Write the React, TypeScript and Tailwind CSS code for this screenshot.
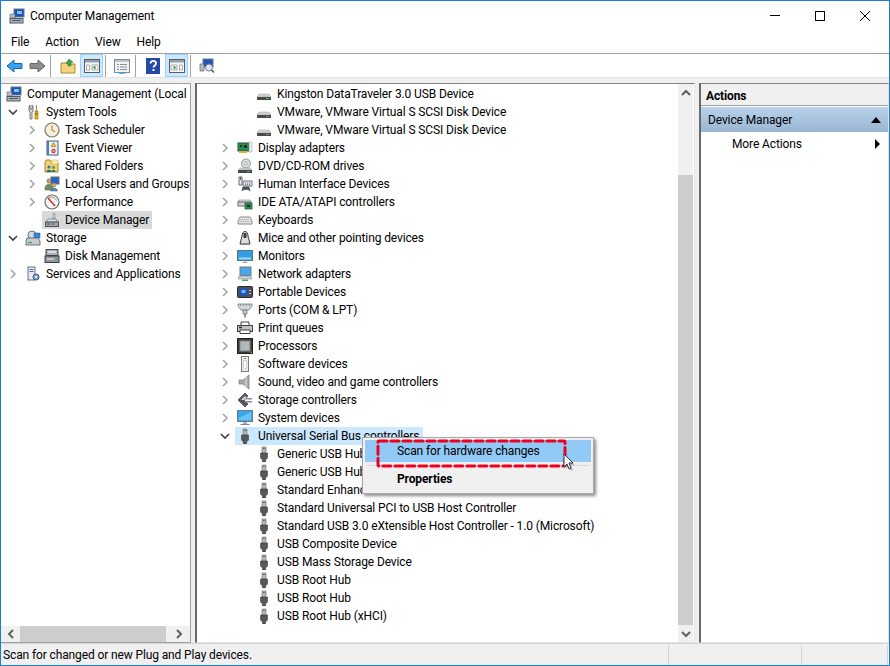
import type { ReactNode } from 'react';

type IconName =
  | 'computer' | 'tools' | 'clock' | 'log' | 'folder' | 'users' | 'perf' | 'devmgr' | 'storage' | 'disk' | 'services'
  | 'drive' | 'display' | 'dvd' | 'hid' | 'ide' | 'kbd' | 'mouse' | 'monitor' | 'net' | 'portable' | 'ports'
  | 'print' | 'cpu' | 'soft' | 'sound' | 'storagec' | 'system' | 'usb';

const icons: Record<IconName, ReactNode> = {
  computer: (
    <>
      <rect x="5" y="1" width="10" height="8" fill="#1d4fb8" stroke="#6b7b90" />
      <path d="M8 3h5v3H8z" fill="#7ec2f2" />
      <path d="M1 6h5v4H1z" fill="#b4bcc4" stroke="#5d6670" strokeWidth="0.6" />
      <rect x="1" y="10.5" width="13" height="4.5" fill="#aeb6bd" stroke="#4e565e" />
      <path d="M3 12.5h9" stroke="#4e565e" />
    </>
  ),
  tools: (
    <>
      <path d="M4 2v5l1 1v7h2V8l1-1V2L7 1v4H5V1z" fill="#d8d8d8" stroke="#5f5f5f" strokeWidth="0.8" />
      <path d="M11 1h1v6h-1z" fill="#8d8d8d" />
      <path d="M10 7h3v8h-3z" fill="#f0b020" stroke="#8a6200" strokeWidth="0.6" />
      <path d="M10.5 10h2" stroke="#5e4300" />
    </>
  ),
  clock: (
    <>
      <circle cx="8" cy="8" r="7" fill="#f5efdc" stroke="#7d7464" strokeWidth="1.2" />
      <path d="M8 3.5V8l3 2" fill="none" stroke="#c08a2e" strokeWidth="1.2" />
    </>
  ),
  log: (
    <>
      <rect x="3" y="1" width="11" height="14" fill="#e8eef6" stroke="#3f5f93" />
      <path d="M3 1h2v14H3z" fill="#5879ad" />
      <path d="M9.5 2.5l2.5 4H7z" fill="#f0c020" stroke="#8a6a00" strokeWidth="0.5" />
      <circle cx="9.5" cy="11" r="2.2" fill="#d8342c" />
      <path d="M8.4 11h2.2" stroke="#fff" />
    </>
  ),
  folder: (
    <>
      <path d="M1 4l1-2h4l1 2h7v10H1z" fill="#f2d072" stroke="#a9883a" />
      <path d="M8 2h6v4H8z" fill="#fbeeb8" stroke="#c9ad5c" strokeWidth="0.5" />
      <circle cx="5" cy="9" r="1.6" fill="#3e6ea0" />
      <path d="M2.5 14c0-3 5-3 5 0z" fill="#2f5d8c" />
      <circle cx="9.5" cy="9.5" r="1.4" fill="#46a05a" />
      <path d="M7.5 14c0-3 4-3 4 0z" fill="#2f7d48" />
    </>
  ),
  users: (
    <>
      <rect x="7" y="1" width="8" height="7" fill="#2a63c4" stroke="#5b6d82" />
      <circle cx="5" cy="5" r="2.2" fill="#c8a070" stroke="#7a5a36" strokeWidth="0.5" />
      <path d="M1 12c0-5 8-5 8 0v2H1z" fill="#70905a" stroke="#4c6038" strokeWidth="0.5" />
      <circle cx="10" cy="9" r="2" fill="#d8b080" stroke="#8a6a44" strokeWidth="0.5" />
      <path d="M6.5 15c0-4 7-4 7 0z" fill="#6084b0" stroke="#3f5c82" strokeWidth="0.5" />
    </>
  ),
  perf: (
    <>
      <circle cx="8" cy="8" r="7" fill="#f7f7f7" stroke="#6a6a6a" strokeWidth="1.2" />
      <path d="M4 4l7 8" stroke="#d42a22" strokeWidth="1.5" />
      <path d="M5 3.5c3-1 6 0 7.5 3" fill="none" stroke="#8a8a8a" />
    </>
  ),
  devmgr: (
    <>
      <path d="M9 1h2v6H9z" fill="#c8ccd0" stroke="#7c8288" strokeWidth="0.5" />
      <path d="M4 7h8l2 3H2z" fill="#dfe2e5" stroke="#656b71" strokeWidth="0.7" />
      <rect x="1.5" y="10" width="13" height="4.5" fill="#9fa6ad" stroke="#4f555b" />
      <path d="M3 12h3M8 12h2" stroke="#3d4348" />
    </>
  ),
  storage: (
    <>
      <circle cx="7" cy="5" r="4" fill="#d5dadf" stroke="#6b7278" />
      <rect x="9" y="3" width="6" height="5" fill="#2d8ad8" stroke="#26619a" strokeWidth="0.5" />
      <path d="M2 8h11l2 3v4H1v-4z" fill="#c6cbd0" stroke="#555b61" strokeWidth="0.8" />
      <path d="M3 12.5h4" stroke="#4ba04b" strokeWidth="1.2" />
    </>
  ),
  disk: (
    <>
      <rect x="2" y="1.5" width="12" height="6" fill="#aab0b6" stroke="#44494e" />
      <path d="M4 4h8" stroke="#f2f2f2" strokeWidth="1.4" />
      <rect x="1" y="8" width="14" height="6.5" fill="#8f959b" stroke="#3a3f44" />
      <path d="M3 11h7" stroke="#e8e8e8" strokeWidth="1.2" />
      <path d="M12 11h2" stroke="#4ba04b" strokeWidth="1.2" />
    </>
  ),
  services: (
    <>
      <rect x="3" y="1" width="7" height="13" fill="#e8ebef" stroke="#6a7179" />
      <path d="M4.5 3.5h4M4.5 5.5h4" stroke="#5071a6" />
      <circle cx="11" cy="11" r="3" fill="#7c9fcf" stroke="#3d5f92" />
      <circle cx="11" cy="11" r="1" fill="#fff" />
    </>
  ),
  drive: (
    <>
      <path d="M3 8h10l2 3H1z" fill="#cfcfcf" stroke="#a5a5a5" strokeWidth="0.5" />
      <rect x="1" y="11" width="14" height="3" fill="#4a4a4a" />
      <path d="M10 12.5h3" stroke="#44c04a" />
    </>
  ),
  display: (
    <>
      <rect x="1" y="3" width="11" height="8" fill="#2f8a52" stroke="#1f5e38" />
      <path d="M3 5h2v2H3zM7 5h3v3H7z" fill="#232f27" />
      <path d="M12 2h3v10h-3z" fill="#e9e9e9" stroke="#a6a6a6" strokeWidth="0.5" />
      <path d="M2 11h8v2H2z" fill="#d8b04a" />
    </>
  ),
  dvd: (
    <>
      <circle cx="9" cy="5.5" r="4.5" fill="#d9dde0" stroke="#92989e" />
      <circle cx="9" cy="5.5" r="1.4" fill="#fff" stroke="#7c8288" strokeWidth="0.6" />
      <path d="M3 10h10l2 2H1z" fill="#cfcfcf" stroke="#a5a5a5" strokeWidth="0.5" />
      <rect x="1" y="12" width="14" height="3" fill="#4a4a4a" />
      <path d="M10 13.5h3" stroke="#44c04a" />
    </>
  ),
  hid: (
    <>
      <path d="M2 1h3v8H2z" fill="#eaeaea" stroke="#5d5d5d" strokeWidth="0.9" />
      <path d="M3.500 1v3" stroke="#5d5d5d" />
      <rect x="6" y="5" width="9" height="5" fill="#dfe3e8" stroke="#6c7683" />
      <path d="M8 7h5M8 8.500h5" stroke="#6c7683" strokeDasharray="1 1" />
      <path d="M5 15l1-4h6l1 4-2-1.500H7z" fill="#4c5766" stroke="#2e3742" strokeWidth="0.6" />
    </>
  ),
  ide: (
    <>
      <path d="M2 6h11l1 2H1z" fill="#dcdcdc" stroke="#8a8a8a" strokeWidth="0.6" />
      <rect x="1" y="8" width="13" height="4" fill="#d2d2d2" stroke="#6a6a6a" />
      <rect x="8" y="9" width="7" height="6" fill="#2f8a52" stroke="#1d5a36" strokeWidth="0.7" />
      <path d="M10 11h3v2h-3z" fill="#1b2b20" />
    </>
  ),
  kbd: (
    <>
      <path d="M3 5h10l2 4v3H1V9z" fill="#e7e7e7" stroke="#8b8b8b" />
      <path d="M3.500 7.500h9M2.500 9.500h11" stroke="#9a9a9a" strokeDasharray="1 0.8" />
    </>
  ),
  mouse: (
    <>
      <path d="M5 6c0-6 6-6 6 0l2 8H3z" fill="#dcdcdc" stroke="#3c3c3c" />
      <path d="M6.500 3h3v5h-3z" fill="#3c3c3c" />
      <path d="M3 14.500h10" stroke="#8a8a8a" />
    </>
  ),
  monitor: (
    <>
      <rect x="0.500" y="2.500" width="15" height="10" fill="#2f9fe6" stroke="#656f78" />
      <path d="M2 9.500h12v2H2z" fill="#ffffff" opacity="0.55" />
      <path d="M5.500 14.500h5" stroke="#9aa3ab" />
      <path d="M8 13v1" stroke="#9aa3ab" />
    </>
  ),
  net: (
    <>
      <rect x="3" y="1" width="11" height="8.500" fill="#49a6e8" stroke="#6d7a86" />
      <path d="M2 10h12l1 3H1z" fill="#c6d0d6" stroke="#8a949c" strokeWidth="0.6" />
      <path d="M5 13.500h6v1.500H5z" fill="#45b04a" />
    </>
  ),
  portable: (
    <>
      <rect x="0.500" y="2.500" width="15" height="11" rx="1" fill="#4c4f54" stroke="#2a2c30" />
      <rect x="2.500" y="4.500" width="8" height="7" fill="#1a53d0" />
      <path d="M4.500 6h4v3h-4z" fill="#79b6ee" />
      <path d="M12 6h2v1h-2zM12 9h2v1h-2z" fill="#c5c8cc" />
    </>
  ),
  ports: (
    <>
      <path d="M1 2h14v2l-3 4v0H4L1 4z" fill="#d5d8db" stroke="#75797d" strokeWidth="0.8" />
      <path d="M3 3h1M6 3h1M9 3h1M12 3h1" stroke="#5c6064" />
      <path d="M6 8h4v4H6z" fill="#c2c6ca" stroke="#75797d" strokeWidth="0.8" />
      <path d="M7 12h2v3.500H7z" fill="#8f9397" />
    </>
  ),
  print: (
    <>
      <path d="M4 2h8v4H4z" fill="#fff" stroke="#3f3f3f" />
      <rect x="0.500" y="5.500" width="15" height="6" fill="#bfc3c7" stroke="#3f3f3f" />
      <path d="M2 7.500h3" stroke="#2d2d2d" strokeWidth="1.500" />
      <path d="M3 10h10v3.500H3z" fill="#fff" stroke="#3f3f3f" />
    </>
  ),
  cpu: (
    <>
      <rect x="0.500" y="0.500" width="15" height="15" fill="#3d3a38" stroke="#242220" />
      <rect x="3" y="3" width="10" height="10" fill="#b4b7ba" stroke="#83878b" />
      <path d="M13 15h2v-2z" fill="#d8862a" />
    </>
  ),
  soft: (
    <>
      <rect x="4.500" y="0.500" width="7" height="15" fill="#ececec" stroke="#7c7c7c" />
      <path d="M7 2h2v1H7z" fill="#46b04a" />
      <path d="M6.500 4.500h3V13h-3z" fill="#fff" stroke="#b4b4b4" strokeWidth="0.600" />
    </>
  ),
  sound: (
    <>
      <path d="M2 6h4l6-5v14l-6-5H2z" fill="#a7a9ab" stroke="#76787a" strokeWidth="0.700" />
      <path d="M9 2.500v11" stroke="#d9dadb" strokeWidth="1.200" />
    </>
  ),
  storagec: (
    <>
      <path d="M8 1L1 8l7 7 3-3-4-4 4-4z" fill="#55595d" stroke="#2e3134" strokeWidth="0.600" />
      <path d="M8 6h7v1.500H8zM8 9h7v1.500H8z" fill="#8b8f93" />
      <path d="M4 8l4-4 1.500 1.500L7 8z" fill="#d7d9db" />
    </>
  ),
  system: (
    <>
      <rect x="0.500" y="0.500" width="15" height="11" fill="#37a7ee" stroke="#6f7a84" />
      <path d="M2 8l12-6v8H2z" fill="#8ed1f8" opacity="0.6" />
      <path d="M6 12h4v2H6z" fill="#a7afb6" />
      <path d="M3.500 14.500h9" stroke="#7f878e" />
    </>
  ),
  usb: (
    <>
      <path d="M6 1h4v6H6z" fill="#b6b6b6" stroke="#707070" strokeWidth="0.600" />
      <path d="M7 2.500h.8M8.500 2.500h.8" stroke="#4a4a4a" />
      <path d="M4.500 7h7v5l-2 2v2h-3v-2l-2-2z" fill="#55585b" stroke="#3b3d40" strokeWidth="0.600" />
    </>
  ),
};

const Icon = ({ name }: { name: IconName }) => (
  <svg viewBox="0 0 16 16" className="h-4 w-4 shrink-0">
    {icons[name]}
  </svg>
);

const Chevron = ({ open }: { open?: boolean }) =>
  open ? (
    <svg viewBox="0 0 10 10" className="h-[10px] w-[10px]">
      <path d="M1 3l4 4 4-4" fill="none" stroke="#404040" strokeWidth="1.600" />
    </svg>
  ) : (
    <svg viewBox="0 0 10 10" className="h-[10px] w-[10px]">
      <path d="M3 1l4 4-4 4" fill="none" stroke="#a6a6a6" strokeWidth="1.600" />
    </svg>
  );

type RowProps = {
  label: string;
  icon: IconName;
  pad: string;
  arrow?: 'open' | 'closed' | 'none';
  active?: string;
};

const Row = ({ label, icon, pad, arrow, active }: RowProps) => (
  <div className={`flex h-[18px] items-center whitespace-nowrap ${pad}`}>
    {arrow && (
      <span className="flex h-[18px] w-[19px] shrink-0 items-center pl-[2px]">
        {arrow !== 'none' && <Chevron open={arrow === 'open'} />}
      </span>
    )}
    <span className={`flex h-[18px] items-center gap-[5px] ${active ?? ''}`}>
      <Icon name={icon} />
      <span className="leading-[18px]">{label}</span>
    </span>
  </div>
);

const Sep = () => <div className="mx-[4px] h-[22px] w-px bg-[#a0a0a0]" />;

const ScrollArrow = ({ d }: { d: string }) => (
  <svg viewBox="0 0 10 10" className="h-[10px] w-[10px]">
    <path d={d} fill="none" stroke="#606060" strokeWidth="2" />
  </svg>
);

const Toolbar = () => (
  <div className="flex h-[23px] shrink-0 items-center pl-[5px]">
    <svg viewBox="0 0 17 14" className="h-[14px] w-[17px]">
      <path d="M8 1L1 7l7 6V9.500h8v-5H8z" fill="#3aa0ee" stroke="#1668b0" />
    </svg>
    <svg viewBox="0 0 17 14" className="ml-[6px] h-[14px] w-[17px]">
      <path d="M9 1l7 6-7 6V9.500H1v-5h8z" fill="#8c8c8c" stroke="#666" />
    </svg>
    <div className="mr-[5px]"><Sep /></div>
    <svg viewBox="0 0 16 16" className="h-4 w-4">
      <path d="M1 5h5l1 1h8v9H1z" fill="#f3d47c" stroke="#a68a3c" />
      <path d="M9 1l4 3-2 .5V8H8V5.500L6 5z" fill="#3fa34a" stroke="#27752f" strokeWidth="0.500" />
    </svg>
    <div className="ml-[4px] flex h-[23px] w-[23px] items-center justify-center border border-[#99d1ff] bg-[#cce8ff]">
      <svg viewBox="0 0 16 14" className="h-[14px] w-4">
        <rect x="0.500" y="0.500" width="15" height="13" fill="#f7f7f7" stroke="#5c5c5c" />
        <path d="M1 1h14v2.500H1z" fill="#8ea0b2" />
        <path d="M2.500 6h3v5h-3zM8 6h6v5H8z" fill="#fff" stroke="#8a8a8a" strokeWidth="0.700" />
        <path d="M11.500 6.500L8.500 8.500l3 2z" fill="#35a041" />
      </svg>
    </div>
    <div className="mx-[-2px]"><Sep /></div>
    <svg viewBox="0 0 16 16" className="ml-[6px] h-4 w-4">
      <rect x="0.500" y="1.500" width="15" height="13" fill="#f2f2f2" stroke="#7f8a96" />
      <path d="M1 2h14v2H1z" fill="#b9c4cf" />
      <path d="M3 6.500h2M6 6.500h7M3 9h2M6 9h7M3 11.500h2M6 11.500h7" stroke="#8a8f94" />
      <path d="M5 15h6" stroke="#35a0e8" strokeWidth="1.500" />
    </svg>
    <div className="ml-[1px] mr-[5px]"><Sep /></div>
    <svg viewBox="0 0 14 16" className="ml-[1px] h-4 w-[14px]">
      <rect width="14" height="16" fill="#2547a8" />
      <path d="M4.500 5.500C4.500 2 10 2 10 5.500c0 2-2.500 2-2.500 4" fill="none" stroke="#fff" strokeWidth="1.800" />
      <path d="M6.500 11h2v2h-2z" fill="#fff" />
    </svg>
    <div className="ml-[5px] flex h-[23px] w-[23px] items-center justify-center border border-[#99d1ff] bg-[#cce8ff]">
      <svg viewBox="0 0 16 14" className="h-[14px] w-4">
        <rect x="0.500" y="0.500" width="15" height="13" fill="#f7f7f7" stroke="#5c5c5c" />
        <path d="M1 1h14v2.500H1z" fill="#8ea0b2" />
        <path d="M2 6h6v5H2zM10.500 6h3v5h-3z" fill="#fff" stroke="#8a8a8a" strokeWidth="0.700" />
        <path d="M4.500 6.500l3 2-3 2z" fill="#35a041" />
      </svg>
    </div>
    <div className="mx-[-2px]"><Sep /></div>
    <svg viewBox="0 0 16 16" className="ml-[6px] h-4 w-4">
      <rect x="4" y="1" width="10" height="8" fill="#2452b8" stroke="#6b7b90" />
      <path d="M1 6h4v7H1z" fill="#b4bcc4" stroke="#5d6670" strokeWidth="0.700" />
      <circle cx="10" cy="9.500" r="3.500" fill="#dfe9f3" stroke="#6f7f90" />
      <path d="M12.500 12l2.500 2.500" stroke="#4a5866" strokeWidth="1.500" />
    </svg>
  </div>
);

const left: RowProps[] = [
  { label: 'Computer Management (Local', icon: 'computer', pad: 'pl-[5px]' },
  { label: 'System Tools', icon: 'tools', pad: 'pl-[5px]', arrow: 'open' },
  { label: 'Task Scheduler', icon: 'clock', pad: 'pl-[24px]', arrow: 'closed' },
  { label: 'Event Viewer', icon: 'log', pad: 'pl-[24px]', arrow: 'closed' },
  { label: 'Shared Folders', icon: 'folder', pad: 'pl-[24px]', arrow: 'closed' },
  { label: 'Local Users and Groups', icon: 'users', pad: 'pl-[24px]', arrow: 'closed' },
  { label: 'Performance', icon: 'perf', pad: 'pl-[24px]', arrow: 'closed' },
  { label: 'Device Manager', icon: 'devmgr', pad: 'pl-[24px]', arrow: 'none', active: '-ml-[2px] bg-[#d9d9d9] pl-[2px] pr-[3px]' },
  { label: 'Storage', icon: 'storage', pad: 'pl-[5px]', arrow: 'open' },
  { label: 'Disk Management', icon: 'disk', pad: 'pl-[24px]', arrow: 'none' },
  { label: 'Services and Applications', icon: 'services', pad: 'pl-[5px]', arrow: 'closed' },
];

const leaf = 'pl-[40px]';
const cat = 'pl-[21px]';

const middle: RowProps[] = [
  { label: 'Kingston DataTraveler 3.0 USB Device', icon: 'drive', pad: leaf, arrow: 'none' },
  { label: 'VMware, VMware Virtual S SCSI Disk Device', icon: 'drive', pad: leaf, arrow: 'none' },
  { label: 'VMware, VMware Virtual S SCSI Disk Device', icon: 'drive', pad: leaf, arrow: 'none' },
  { label: 'Display adapters', icon: 'display', pad: cat, arrow: 'closed' },
  { label: 'DVD/CD-ROM drives', icon: 'dvd', pad: cat, arrow: 'closed' },
  { label: 'Human Interface Devices', icon: 'hid', pad: cat, arrow: 'closed' },
  { label: 'IDE ATA/ATAPI controllers', icon: 'ide', pad: cat, arrow: 'closed' },
  { label: 'Keyboards', icon: 'kbd', pad: cat, arrow: 'closed' },
  { label: 'Mice and other pointing devices', icon: 'mouse', pad: cat, arrow: 'closed' },
  { label: 'Monitors', icon: 'monitor', pad: cat, arrow: 'closed' },
  { label: 'Network adapters', icon: 'net', pad: cat, arrow: 'closed' },
  { label: 'Portable Devices', icon: 'portable', pad: cat, arrow: 'closed' },
  { label: 'Ports (COM & LPT)', icon: 'ports', pad: cat, arrow: 'closed' },
  { label: 'Print queues', icon: 'print', pad: cat, arrow: 'closed' },
  { label: 'Processors', icon: 'cpu', pad: cat, arrow: 'closed' },
  { label: 'Software devices', icon: 'soft', pad: cat, arrow: 'closed' },
  { label: 'Sound, video and game controllers', icon: 'sound', pad: cat, arrow: 'closed' },
  { label: 'Storage controllers', icon: 'storagec', pad: cat, arrow: 'closed' },
  { label: 'System devices', icon: 'system', pad: cat, arrow: 'closed' },
  { label: 'Universal Serial Bus controllers', icon: 'usb', pad: cat, arrow: 'open', active: '-ml-[2px] bg-[#cce8ff] pl-[2px] pr-[4px]' },
  { label: 'Generic USB Hub', icon: 'usb', pad: leaf, arrow: 'none' },
  { label: 'Generic USB Hub', icon: 'usb', pad: leaf, arrow: 'none' },
  { label: 'Standard Enhanced PCI to USB Host Controller', icon: 'usb', pad: leaf, arrow: 'none' },
  { label: 'Standard Universal PCI to USB Host Controller', icon: 'usb', pad: leaf, arrow: 'none' },
  { label: 'Standard USB 3.0 eXtensible Host Controller - 1.0 (Microsoft)', icon: 'usb', pad: leaf, arrow: 'none' },
  { label: 'USB Composite Device', icon: 'usb', pad: leaf, arrow: 'none' },
  { label: 'USB Mass Storage Device', icon: 'usb', pad: leaf, arrow: 'none' },
  { label: 'USB Root Hub', icon: 'usb', pad: leaf, arrow: 'none' },
  { label: 'USB Root Hub', icon: 'usb', pad: leaf, arrow: 'none' },
  { label: 'USB Root Hub (xHCI)', icon: 'usb', pad: leaf, arrow: 'none' },
];

export default function App() {
  return (
    <div className="relative flex h-[666px] w-[890px] flex-col overflow-hidden border border-[#1a7fd0] bg-white font-['Roboto',sans-serif] text-[12px] tracking-[-0.12px] text-black">
      {/* title bar */}
      <div className="flex h-[29px] shrink-0 items-center pl-2">
        <Icon name="computer" />
        <span className="ml-[5px]">Computer Management</span>
        <div className="ml-auto flex items-center gap-[35px] pr-[19px]">
          <div className="h-px w-[10px] bg-black" />
          <div className="h-[10px] w-[10px] border border-black" />
          <svg viewBox="0 0 10 10" className="h-[10px] w-[10px]">
            <path d="M0 0l10 10M10 0L0 10" stroke="#000" strokeWidth="1" />
          </svg>
        </div>
      </div>
      {/* menu */}
      <div className="flex h-[24px] shrink-0 items-center gap-[16px] border-b border-[#a0a0a0] pl-[10px]">
        <span>File</span>
        <span>Action</span>
        <span>View</span>
        <span>Help</span>
      </div>
      <Toolbar />
      {/* panes */}
      <div className="flex min-h-0 flex-1 gap-[4px] border-t border-[#e3e3e3] bg-[#f0f0f0] pt-[5px]">
        <div className="flex w-[190px] shrink-0 flex-col border-t border-r border-b border-[#a0a0a0] bg-white">
          <div className="min-h-0 flex-1 overflow-hidden pt-px">
            {left.map((r, i) => <Row key={i} {...r} />)}
          </div>
          <div className="flex h-[16px] items-center bg-[#f0f0f0]">
            <span className="flex w-[19px] justify-center"><ScrollArrow d="M7 1L3 5l4 4" /></span>
            <div className="h-full w-[146px] bg-[#cdcdcd]" />
            <span className="ml-auto flex w-[22px] justify-center"><ScrollArrow d="M3 1l4 4-4 4" /></span>
          </div>
        </div>
        <div className="flex w-[500px] shrink-0 border-t border-r border-b border-l-2 border-t-[#808080] border-r-[#e3e3e3] border-b-[#e3e3e3] border-l-[#696969] bg-white pr-px">
          <div className="min-w-0 flex-1 overflow-hidden pt-px">
            {middle.map((r, i) => <Row key={i} {...r} />)}
          </div>
          <div className="flex w-[15px] shrink-0 flex-col bg-[#f0f0f0]">
            <span className="flex h-[17px] items-center justify-center"><ScrollArrow d="M1 7l4-4 4 4" /></span>
            <div className="mt-[74px] flex-1 bg-[#cdcdcd]" />
            <span className="flex h-[17px] items-center justify-center"><ScrollArrow d="M1 3l4 4 4-4" /></span>
          </div>
        </div>
        <div className="flex min-w-0 flex-1 flex-col border-t border-r border-b border-l-2 border-t-[#808080] border-r-[#e3e3e3] border-b-[#e3e3e3] border-l-[#696969] bg-white">
          <div className="flex h-[22px] shrink-0 items-center border-b border-[#a0a0a0] bg-[#f0f0f0] pl-[5px] pt-[2px] font-bold">Actions</div>
          <div className="mt-px flex h-[25px] shrink-0 items-center justify-between bg-gradient-to-b from-[#bad2ea] to-[#9ab5d3] pl-[7px] pr-[7px]">
            <span>Device Manager</span>
            <svg viewBox="0 0 10 6" className="h-[6px] w-[10px]"><path d="M5 0l5 6H0z" fill="#000" /></svg>
          </div>
          <div className="flex h-[24px] shrink-0 items-center justify-between pl-[31px] pr-[8px]">
            <span>More Actions</span>
            <svg viewBox="0 0 5 10" className="h-[10px] w-[5px]"><path d="M0 0l5 5-5 5z" fill="#000" /></svg>
          </div>
        </div>
      </div>
      {/* status bar */}
      <div className="flex h-[22px] shrink-0 items-center border-t border-[#d4d4d4] bg-[#f0f0f0] pl-[2px]">
        <span className="w-[665px]">Scan for changed or new Plug and Play devices.</span>
        <div className="h-[20px] border-l border-[#d4d4d4]" />
        <div className="ml-[132px] h-[20px] border-l border-[#d4d4d4]" />
        <div className="ml-[85px] h-[20px] border-l border-[#d4d4d4]" />
      </div>

      {/* context menu */}
      <div className="absolute left-[361px] top-[436px] h-[57px] w-[232px] border border-[#a8a8a8] bg-[#f0f0f0] p-[2px] shadow-[2px_2px_3px_rgba(0,0,0,0.45)]">
        <div className="flex h-[22px] items-center bg-[#91c9f7] pl-[32px]">Scan for hardware changes</div>
        <div className="mx-[2px] mt-[3px] h-px bg-[#d7d7d7]" />
        <div className="mt-[4px] pl-[32px] font-bold">Properties</div>
      </div>
      {/* red annotation */}
      <svg viewBox="0 0 192 30" className="absolute left-[375px] top-[438px] h-[30px] w-[192px]">
        <rect x="2" y="2" width="187" height="25" rx="1" fill="none" stroke="#f0001e" strokeWidth="3" strokeDasharray="8 4" strokeLinecap="round" />
      </svg>
      {/* cursor */}
      <svg viewBox="0 0 13 19" className="absolute left-[562px] top-[452px] h-[19px] w-[13px]">
        <path d="M2 2v13l3-3 2 5 2-1-2-5h4z" fill="#333" opacity="0.3" transform="translate(1 1)" />
        <path d="M1 1v13l3-3 2 5 2-1-2-5h4z" fill="#fff" stroke="#333" strokeWidth="1" />
      </svg>
    </div>
  );
}
